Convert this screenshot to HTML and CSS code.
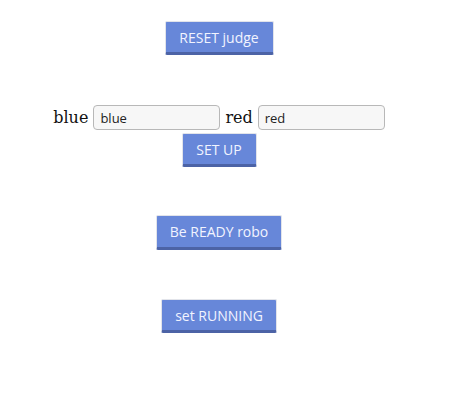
FILE: index.html
```html
<!DOCTYPE html>
<html lang="en">
<head>
<meta charset="UTF-8">
<title>judge</title>
<link rel="stylesheet" href="styles.css">
</head>
<body>

<div class="page">
    <div class="block block-reset">
        <button class="btn btn-reset">RESET judge</button>
    </div>

    <div class="block block-setup">
        <div class="team-row">
            <label class="team-label">blue</label>
            <input type="text" class="team-input" value="blue">
            <label class="team-label">red</label>
            <input type="text" class="team-input" value="red">
        </div>
        <button class="btn btn-setup">SET UP</button>
    </div>

    <div class="block block-ready">
        <button class="btn btn-ready">Be READY robo</button>
    </div>

    <div class="block block-running">
        <button class="btn btn-running">set RUNNING</button>
    </div>
</div>

</body>
</html>
```

FILE: styles.css
```css
body {
    margin: 0;
    background: #fff;
}

.page {
    width: 438px;
    display: flex;
    flex-direction: column;
    align-items: center;
    padding-top: 21px;
}

.block {
    display: flex;
    flex-direction: column;
    align-items: center;
}

.block-setup {
    margin-top: 50px;
}

.block-ready {
    margin-top: 48px;
}

.block-running {
    margin-top: 49px;
}

.btn {
    font-family: "Open Sans", sans-serif;
    font-size: 14px;
    color: #f2f4ff;
    background: #6787d9;
    border: 1px solid #e2e4ea;
    border-bottom: 3px solid #4c63a6;
    border-radius: 2px;
    height: 34px;
    padding: 0;
    box-sizing: border-box;
}

.btn-setup {
    margin-top: 3px;
    width: 75px;
}

.btn-ready {
    width: 126px;
    height: 35px;
}

.btn-running {
    width: 116px;
}

.btn-reset {
    width: 109px;
}

.team-row {
    display: flex;
    align-items: center;
    gap: 5px;
    height: 25px;
}

.team-label {
    font-family: "DejaVu Serif", serif;
    font-size: 16px;
    color: #111;
}

.team-input {
    font-family: "Open Sans", sans-serif;
    font-size: 13px;
    color: #222;
    width: 127px;
    height: 25px;
    box-sizing: border-box;
    padding: 0 6px;
    border: 1px solid #b8b8b8;
    border-radius: 4px;
    background: #f7f7f7;
}
```
